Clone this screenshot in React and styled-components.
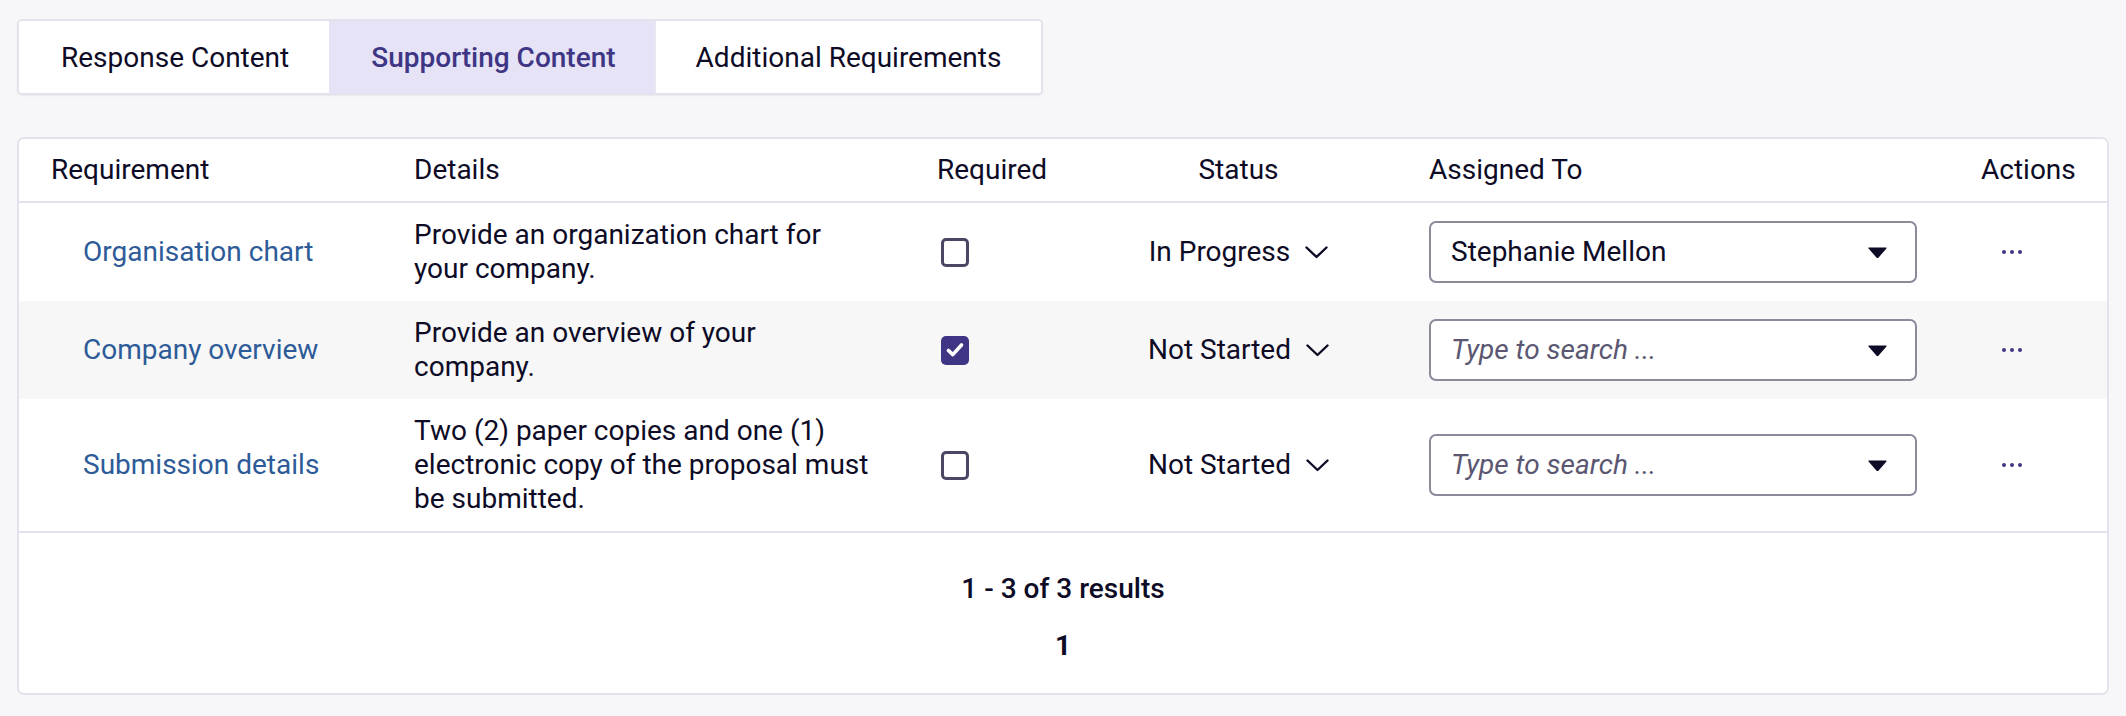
import React, { useState } from "react";
import styled, { createGlobalStyle } from "styled-components";

const GlobalStyle = createGlobalStyle`
  * { box-sizing: border-box; }
  body {
    margin: 0;
    background: #f7f7f9;
    font-family: Roboto, "Liberation Sans", Arial, sans-serif;
    color: #0d0b26;
  }
`;

const tabs = ["Response Content", "Supporting Content", "Additional Requirements"];

const rows = [
  {
    name: "Organisation chart",
    details: "Provide an organization chart for your company.",
    required: false,
    status: "In Progress",
    assignee: "Stephanie Mellon",
  },
  {
    name: "Company overview",
    details: "Provide an overview of your company.",
    required: true,
    status: "Not Started",
    assignee: "",
  },
  {
    name: "Submission details",
    details:
      "Two (2) paper copies and one (1) electronic copy of the proposal must be submitted.",
    required: false,
    status: "Not Started",
    assignee: "",
  },
];

const columns = [
  { label: "Requirement", width: 363 },
  { label: "Details", width: 523 },
  { label: "Required", width: 175 },
  { label: "Status", width: 317, center: true },
  { label: "Assigned To", width: 552 },
  { label: "Actions", width: 158 },
];

function Chevron() {
  return (
    <svg width="23" height="13" viewBox="0 0 23 13" fill="none">
      <path d="M1.5 1.5 L11.5 11 L21.5 1.5" stroke="#0d0b26" strokeWidth="2.4" strokeLinecap="round" strokeLinejoin="round" />
    </svg>
  );
}

function Caret() {
  return (
    <svg width="19" height="11" viewBox="0 0 19 11">
      <path d="M1 1 H18 L10.2 10 Q9.5 10.8 8.8 10 Z" fill="#0d0b26" stroke="#0d0b26" strokeWidth="1.2" strokeLinejoin="round" />
    </svg>
  );
}

function Dots() {
  return (
    <svg width="22" height="6" viewBox="0 0 22 6">
      <circle cx="3" cy="3" r="2" fill="#3e3685" />
      <circle cx="11" cy="3" r="2" fill="#3e3685" />
      <circle cx="19" cy="3" r="2" fill="#3e3685" />
    </svg>
  );
}

function Check({ checked }) {
  return (
    <Box $checked={checked}>
      {checked && (
        <svg width="18" height="16" viewBox="0 0 18 16">
          <path d="M2.5 8.5 L6.8 12.6 L15.5 3" stroke="#fff" strokeWidth="3.6" fill="none" strokeLinecap="round" strokeLinejoin="round" />
        </svg>
      )}
    </Box>
  );
}

export default function App() {
  const [active, setActive] = useState(1);

  return (
    <Page>
      <GlobalStyle />
      <TabBar>
        {tabs.map((t, i) => (
          <Tab
            key={t}
            $active={i === active}
            $divider={i > 0 && i - 1 === active}
            onClick={() => setActive(i)}
          >
            {t}
          </Tab>
        ))}
      </TabBar>

      <Card>
        <Table>
          <colgroup>
            {columns.map((c) => (
              <col key={c.label} style={{ width: c.width }} />
            ))}
          </colgroup>
          <thead>
            <tr>
              {columns.map((c) => (
                <Th key={c.label} $center={c.center}>
                  {c.label}
                </Th>
              ))}
            </tr>
          </thead>
          <tbody>
            {rows.map((r, i) => (
              <Row key={r.name} $striped={i % 2 === 1}>
                <Td>
                  <Link href="#">{r.name}</Link>
                </Td>
                <Td>{r.details}</Td>
                <Td>
                  <Check checked={r.required} />
                </Td>
                <Td $center>
                  <StatusButton>
                    {r.status}
                    <Chevron />
                  </StatusButton>
                </Td>
                <Td>
                  <Select>
                    {r.assignee ? (
                      <SelectValue>{r.assignee}</SelectValue>
                    ) : (
                      <Placeholder>Type to search ...</Placeholder>
                    )}
                    <Caret />
                  </Select>
                </Td>
                <Td>
                  <ActionButton>
                    <Dots />
                  </ActionButton>
                </Td>
              </Row>
            ))}
          </tbody>
        </Table>
        <Footer>
          <Results>1 - 3 of 3 results</Results>
          <PageNumber>1</PageNumber>
        </Footer>
      </Card>
    </Page>
  );
}

const Page = styled.div`
  padding: 19px 17px 22px 17px;
  display: flex;
  flex-direction: column;
  align-items: flex-start;
  gap: 42px;
`;

const TabBar = styled.div`
  display: flex;
  background: #fff;
  border: 2px solid #e4e3ed;
  border-radius: 5px;
  overflow: hidden;
  box-shadow: 0 1px 2px rgba(20, 18, 60, 0.06);
`;

const Tab = styled.button`
  height: 72px;
  padding: 0 40px;
  border: none;
  border-left: 2px solid ${(p) => (p.$divider ? "#e9e8f1" : "transparent")};
  margin-left: ${(p) => (p.$divider ? "-2px" : "0")};
  background: ${(p) => (p.$active ? "#e6e3f6" : "#fff")};
  color: ${(p) => (p.$active ? "#3e3685" : "#0d0b26")};
  font-family: inherit;
  font-size: 28px;
  font-weight: ${(p) => (p.$active ? 500 : 400)};
  cursor: pointer;
`;

const Card = styled.div`
  align-self: stretch;
  background: #fff;
  border: 2px solid #e4e3ed;
  border-radius: 7px;
  overflow: hidden;
`;

const Table = styled.table`
  width: 100%;
  table-layout: fixed;
  border-collapse: collapse;
  font-size: 28px;
  line-height: 34px;
`;

const Th = styled.th`
  padding: 14px 32px;
  text-align: ${(p) => (p.$center ? "center" : "left")};
  font-weight: 400;
  border-bottom: 2px solid #e4e3ed;
`;

const Row = styled.tr`
  background: ${(p) => (p.$striped ? "#f7f7f7" : "#fff")};
`;

const Td = styled.td`
  padding: 15px 32px;
  vertical-align: middle;
  text-align: ${(p) => (p.$center ? "center" : "left")};
`;

const Link = styled.a`
  display: inline-block;
  margin-left: 32px;
  color: #2d5b98;
  text-decoration: none;
`;

const Box = styled.span`
  display: flex;
  align-items: center;
  justify-content: center;
  width: 28px;
  height: 29px;
  margin-left: 4px;
  border-radius: 5px;
  border: ${(p) => (p.$checked ? "none" : "3px solid #4b4664")};
  background: ${(p) => (p.$checked ? "#3e3685" : "#fff")};
`;

const StatusButton = styled.button`
  display: inline-flex;
  align-items: center;
  gap: 15px;
  padding: 0;
  border: none;
  background: none;
  font: inherit;
  color: inherit;
  cursor: pointer;
`;

const Select = styled.div`
  display: flex;
  align-items: center;
  justify-content: space-between;
  height: 62px;
  padding: 0 28px 0 20px;
  background: #fff;
  border: 2px solid #8c899b;
  border-radius: 7px;
`;

const SelectValue = styled.span`
  color: #0d0b26;
`;

const Placeholder = styled.span`
  color: #5b5772;
  font-style: italic;
`;

const ActionButton = styled.button`
  display: flex;
  align-items: center;
  padding: 8px 0 8px 20px;
  border: none;
  background: none;
  cursor: pointer;
`;

const Footer = styled.div`
  display: flex;
  flex-direction: column;
  align-items: center;
  gap: 23px;
  padding: 39px 0 30px;
  border-top: 2px solid #e4e3ed;
  font-size: 28px;
  line-height: 34px;
`;

const Results = styled.div`
  font-weight: 500;
`;

const PageNumber = styled.div`
  font-weight: 700;
`;
